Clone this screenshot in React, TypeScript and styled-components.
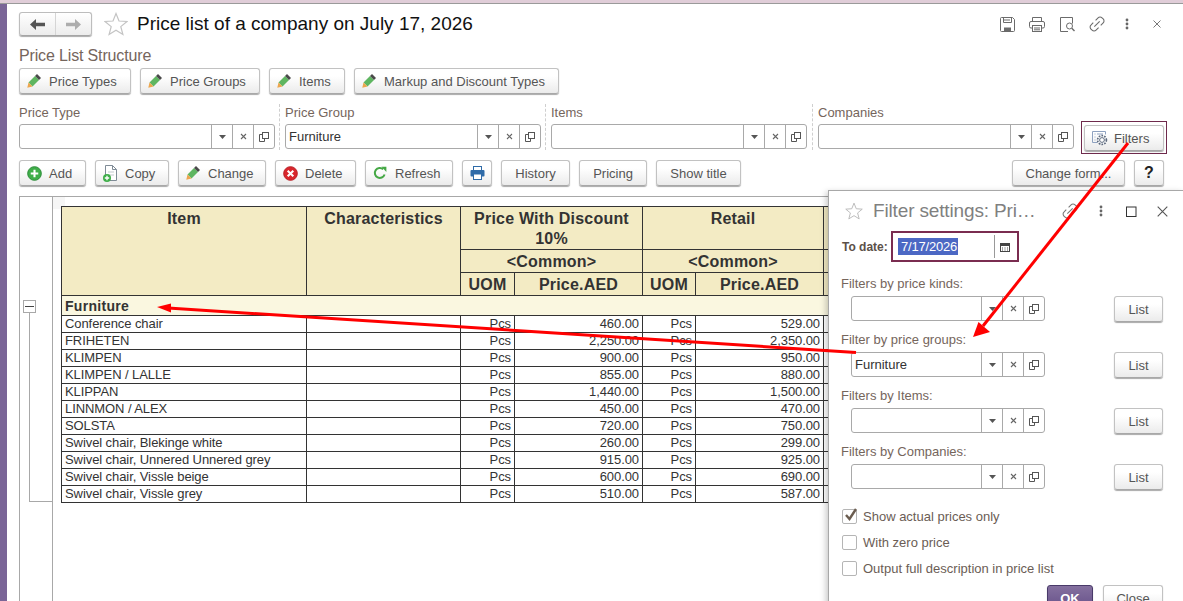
import React from "react";
import styled, { createGlobalStyle } from "styled-components";

const Global = createGlobalStyle`
  html, body { margin: 0; padding: 0; background: #fff; overflow: hidden; }
  body { font-family: "Liberation Sans", Arial, sans-serif; font-size: 13px; color: #4a4a4a; }
  * { box-sizing: border-box; }
`;

const Page = styled.div`
  position: relative; width: 1183px; height: 601px; overflow: hidden;
  display: flex; flex-direction: column; background: #fff;
`;
const TopStrip = styled.div`
  height: 4px; flex: none; background: #e0cdd8; border-bottom: 1px solid #9a9a9a;
`;
const Body = styled.div`flex: 1; display: flex; min-height: 0;`;
const Sidebar = styled.div`width: 7px; flex: none; background: #7a6597;`;
const Main = styled.div`
  flex: 1; min-width: 0; padding: 8px 0 0 12px; display: flex; flex-direction: column;
`;

const Header = styled.div`height: 24px; display: flex; align-items: center; flex: none;`;
const NavGroup = styled.div`
  display: flex; width: 73px; height: 24px; border: 1px solid #bdbdbd; border-bottom-color: #a5a5a5;
  border-radius: 3px; background: linear-gradient(#fff, #ececec); box-shadow: 0 1px 1px #aaa;
`;
const NavCell = styled.div<{ $sep?: boolean }>`
  flex: 1; display: flex; align-items: center; justify-content: center;
  ${(p) => (p.$sep ? "border-left: 1px solid #d5d5d5;" : "")}
`;
const StarSlot = styled.div`width: 24px; height: 24px; margin-left: 12px; display: flex; align-items: center;`;
const Title = styled.h1`
  margin: 0 0 0 9px; font-size: 19px; font-weight: 400; color: #111; white-space: nowrap;
`;
const HeaderTools = styled.div`
  margin-left: auto; margin-right: 11px; display: flex; align-items: center;
`;
const ToolSlot = styled.div<{ $w: number }>`
  width: ${(p) => p.$w}px; flex: none; display: flex; align-items: center; justify-content: center;
`;

const SectionTitle = styled.div`
  margin-top: 11px; height: 18px; line-height: 18px; font-size: 16px; letter-spacing: -0.15px; color: #75655c; flex: none;
`;
const ButtonRow = styled.div<{ $mt: number }>`
  display: flex; gap: 9px; margin-top: ${(p) => p.$mt}px; height: 26px; flex: none;
  padding-right: 19px;
`;
const Btn = styled.div<{ $w: number; $icon?: boolean; $gap?: number }>`
  width: ${(p) => p.$w}px; height: 26px; flex: none; display: flex; align-items: center;
  justify-content: ${(p) => (p.$icon ? "flex-start" : "center")};
  padding-left: ${(p) => (p.$icon ? 7 : 0)}px; gap: ${(p) => p.$gap ?? 8}px;
  border: 1px solid #c2c2c2; border-bottom-color: #a8a8a8; border-radius: 3px;
  background: linear-gradient(#fff 30%, #ebebeb); box-shadow: 0 1px 1px #a9a9a9;
  font-size: 13px; color: #555; white-space: nowrap;
`;
const Spacer = styled.div`flex: 1;`;
const HelpMark = styled.span`font-size: 16px; font-weight: 700; color: #222;`;

const FilterRow = styled.div`display: flex; margin-top: 10px; height: 46px; flex: none; align-items: flex-start;`;
const FilterCol = styled.div<{ $w: number; $first?: boolean; $last?: boolean }>`
  width: ${(p) => p.$w}px; height: 46px; flex: none;
  padding-left: ${(p) => (p.$first ? 0 : 5)}px;
  border-right: ${(p) => (p.$last ? "none" : "1px dashed #cfcfcf")};
  display: flex; flex-direction: column;
`;
const FieldLabel = styled.div`height: 20px; line-height: 17px; font-size: 13px; color: #75655c;`;
const Field = styled.div<{ $w: number }>`
  width: ${(p) => p.$w}px; height: 25px; flex: none; display: flex; background: #fff;
  border: 1px solid #a9a9a9; border-radius: 3px;
`;
const FieldValue = styled.div`flex: 1; padding-left: 3px; line-height: 23px; font-size: 13px; color: #333;`;
const FieldBtn = styled.div`
  width: 21px; flex: none; border-left: 1px solid #a9a9a9; display: flex; align-items: center; justify-content: center;
`;
const FilterHighlight = styled.div`
  width: 86px; height: 33px; flex: none; margin: 17px 0 0 7px; padding: 3px 2px;
  border: 1px solid #6e2a4c;
`;

const SheetBox = styled.div`
  margin-top: 10px; margin-right: 18px; flex: 1; min-height: 0; display: flex; overflow: hidden;
  border: 1px solid #a8a8a8; border-bottom: none;
`;
const Gutter = styled.div`
  width: 33px; flex: none; position: relative; border-right: 1px solid #a8a8a8;
`;
const TreeMarker = styled.div`
  position: absolute; left: 3px; top: 103px; width: 13px; height: 13px; z-index: 1;
  border: 1px solid #a8a8a8; background: #fff;
  &::after { content: ""; position: absolute; left: 1px; right: 1px; top: 5px; height: 1px; background: #444; }
`;
const TreeLine = styled.div`
  position: absolute; left: 9px; top: 115px; width: 23px; height: 190px;
  border-left: 1px solid #a8a8a8; border-bottom: 1px solid #a8a8a8;
`;
const SheetArea = styled.div`
  position: relative; flex: 1; min-width: 0; padding: 9px 0 0 8px;
  &::before { content: ""; position: absolute; left: 0; top: 0; width: 12px; height: 12px; background: #f6f6f6; }
`;
const Table = styled.table`
  position: relative; border-collapse: collapse; table-layout: fixed; width: 962px;
  font-size: 13px; color: #333;
`;
const HeadCell = styled.th`
  padding: 2px 0 0; border: 1px solid #333; background: #f3ebc4; font-size: 16px; line-height: 20px;
  font-weight: 700; text-align: center; vertical-align: top; color: #333; letter-spacing: 0.2px;
`;
const GroupCell = styled.td`
  padding: 0 3px; border: 1px solid #333; background: #faf7e0; height: 20px; font-size: 14px; font-weight: 700;
  line-height: 18px; letter-spacing: 0.3px; color: #333;
`;
const Cell = styled.td<{ $right?: boolean }>`
  padding: 0 3px; height: 17px; line-height: 16px; border: 1px solid #333; white-space: nowrap; overflow: hidden;
  letter-spacing: -0.08px;
  text-align: ${(p) => (p.$right ? "right" : "left")};
`;

const Dialog = styled.div`
  position: absolute; left: 828px; top: 190px; width: 356px; height: 430px; background: #fff;
  border: 1px solid #a8a8a8; box-shadow: -2px 2px 6px rgba(0,0,0,.22); padding-left: 13px;
`;
const DialogHeader = styled.div`height: 40px; display: flex; align-items: center; padding-left: 3px;`;
const DialogTitle = styled.div`
  margin-left: 10px; font-size: 19px; letter-spacing: -0.15px; color: #808080; white-space: nowrap; width: 181px;
`;
const DateRow = styled.div`display: flex; align-items: center; height: 31px;`;
const DateLabel = styled.div`font-size: 12px; font-weight: 700; color: #5c5048; width: 49px; white-space: nowrap;`;
const DateBox = styled.div`
  width: 128px; height: 31px; border: 2px solid #7a2c50; display: flex; align-items: center; padding-left: 5px;
`;
const Selected = styled.span`background: #4c68c4; color: #fff; font-size: 13px; line-height: 17px; padding: 0 1px 0 3px; letter-spacing: -0.2px;`;
const DateBtn = styled.div`
  margin-left: auto; width: 23px; height: 23px; border-left: 1px solid #999; display: flex; align-items: center; padding-left: 5px;
`;
const FilterSection = styled.div<{ $first?: boolean }>`margin-top: ${(p) => (p.$first ? 14 : 10)}px;`;
const SectionLabel = styled.div`height: 20px; line-height: 16px; font-size: 13px; margin-left: -1px; color: #75655c; white-space: nowrap;`;
const SectionRow = styled.div`display: flex; padding-left: 9px; height: 26px;`;
const ListSlot = styled.div`margin-left: 69px;`;
const CheckGroup = styled.div`margin-top: 13px;`;
const CheckRow = styled.div`height: 26px; display: flex; align-items: center; gap: 6px; font-size: 13px; color: #6b5d55;`;
const CheckBox = styled.div`
  width: 15px; height: 15px; border: 1px solid #b5b5b5; border-radius: 2px; position: relative; background: #fff;
`;
const CheckMark = styled.svg`position: absolute; left: 0; top: -3px;`;
const DialogActions = styled.div`
  margin-top: 4px; display: flex; justify-content: flex-end; gap: 10px; padding-right: 20px;
`;
const PrimaryBtn = styled(Btn)`
  background: linear-gradient(#84709f, #654f88); border-color: #493a69; color: #fff; font-weight: 700;
`;
const Overlay = styled.svg`position: absolute; left: 0; top: 0; pointer-events: none; z-index: 5;`;

const Pencil = () => (
  <svg width="14" height="14" viewBox="0 0 14 14">
    <polygon points="1.5,8.5 8,2 12,6 5.5,12.5" fill="#5fb661" />
    <polygon points="1.5,8.5 5.5,12.5 0.3,13.7" fill="#eda64d" />
    <polygon points="8,2 10,0 14,4 12,6" fill="#4a4a4a" />
  </svg>
);
const PlusCircle = () => (
  <svg width="15" height="15" viewBox="0 0 16 16">
    <circle cx="8" cy="8" r="7.3" fill="#3fae49" stroke="#2a8a36" />
    <path d="M8 4v8M4 8h8" stroke="#fff" strokeWidth="2.2" />
  </svg>
);
const CopyIcon = () => (
  <svg width="14" height="18" viewBox="0 0 14 18">
    <path d="M2.5 1.5h7l4 4v11h-11z" fill="#fff" stroke="#7f8b96" />
    <path d="M9.5 1.5v4h4" fill="none" stroke="#7f8b96" />
    <path d="M5 8h6M5 11h6" stroke="#c3c9ce" />
    <circle cx="4" cy="14" r="4" fill="#3fae49" />
    <path d="M4 11.8v4.4M1.8 14h4.4" stroke="#fff" strokeWidth="1.3" />
  </svg>
);
const DeleteIcon = () => (
  <svg width="15" height="15" viewBox="0 0 16 16">
    <circle cx="8" cy="8" r="7.3" fill="#d8262c" stroke="#b81c22" />
    <path d="M5 5l6 6M11 5l-6 6" stroke="#fff" strokeWidth="2.2" />
  </svg>
);
const RefreshIcon = () => (
  <svg width="14" height="14" viewBox="0 0 14 14">
    <path d="M11.6 8.5A5 5 0 1 1 10.2 3.2" fill="none" stroke="#45a845" strokeWidth="2" />
    <polygon points="8.4,0.8 13.4,0.8 13.4,6" fill="#45a845" />
  </svg>
);
const PrintBlue = () => (
  <svg width="15" height="14" viewBox="0 0 15 14">
    <rect x="3.5" y="0.5" width="8" height="4" fill="#fff" stroke="#2f6ba8" />
    <rect x="0.5" y="4" width="14" height="6.5" rx="1" fill="#2f6ba8" />
    <rect x="3.5" y="8" width="8" height="5.5" fill="#fff" stroke="#2f6ba8" />
  </svg>
);
const FiltersIcon = () => (
  <svg width="16" height="16" viewBox="0 0 16 16">
    <path d="M.5 1.5h13v3M.5 1.5v11h5" fill="none" stroke="#8fa2c0" />
    <path d="M2.5 4h1M2.5 7h1M2.5 10h1M5 4h6" stroke="#8fa2c0" />
    <circle cx="10" cy="10" r="4.4" fill="#fff" stroke="#5d6a7e" strokeWidth="1.7" strokeDasharray="1.7 1.1" />
    <circle cx="10" cy="10" r="2.4" fill="#fff" stroke="#5d6a7e" />
  </svg>
);
const Chevron = () => (
  <svg width="7" height="4" viewBox="0 0 7 4"><polygon points="0,0 7,0 3.5,4" fill="#555" /></svg>
);
const Cross = () => (
  <svg width="7" height="7" viewBox="0 0 7 7"><path d="M1 1l5 5M6 1L1 6" stroke="#666" strokeWidth="1.1" /></svg>
);
const OpenIcon = () => (
  <svg width="10" height="10" viewBox="0 0 10 10">
    <rect x="3.5" y="0.5" width="6" height="6" fill="none" stroke="#555" />
    <path d="M3.5 2.5H.5v7h5V6.5" fill="none" stroke="#555" />
  </svg>
);
const StarIcon = ({ size, color }: { size: number; color: string }) => (
  <svg width={size} height={size} viewBox="0 0 24 24">
    <polygon points="12,1.5 15,9 23,9.5 16.8,14.6 18.9,22.5 12,18.2 5.1,22.5 7.2,14.6 1,9.5 9,9" fill="none" stroke={color} strokeWidth="1.2" />
  </svg>
);
const SaveIcon = () => (
  <svg width="15" height="15" viewBox="0 0 15 15">
    <path d="M1.5.5h11l2 2v11a1 1 0 0 1-1 1h-12a1 1 0 0 1-1-1v-12a1 1 0 0 1 1-1z" fill="none" stroke="#6b6b6b" />
    <path d="M3.5.5v5h8v-5M4 3h6" fill="none" stroke="#6b6b6b" />
    <rect x="4" y="10.5" width="7" height="4" fill="#6b6b6b" />
  </svg>
);
const PrintIcon = () => (
  <svg width="16" height="15" viewBox="0 0 16 15">
    <path d="M3.5 4.5v-4h9v4" fill="none" stroke="#6b6b6b" />
    <rect x="0.5" y="4.5" width="15" height="6.5" rx="1.5" fill="none" stroke="#6b6b6b" />
    <rect x="3.5" y="8.5" width="9" height="6" fill="#fff" stroke="#6b6b6b" />
    <path d="M5 11h6M5 12.8h6" stroke="#6b6b6b" />
  </svg>
);
const PreviewIcon = () => (
  <svg width="15" height="15" viewBox="0 0 15 15">
    <path d="M8 14.5H.5V.5h12v6" fill="none" stroke="#6b6b6b" />
    <circle cx="9.5" cy="9" r="3" fill="#fff" stroke="#6b6b6b" />
    <path d="M11.8 11.3l2.7 2.7" stroke="#6b6b6b" strokeWidth="1.4" />
  </svg>
);
const LinkIcon = ({ color = "#6b6b6b", size = 16 }: { color?: string; size?: number }) => (
  <svg width={size} height={size} viewBox="0 0 15 15">
    <path d="M6.2 4l2.3-2.3a2.6 2.6 0 0 1 3.7 0l1.1 1.1a2.6 2.6 0 0 1 0 3.7L11 8.8M9 11l-2.4 2.3a2.6 2.6 0 0 1-3.7 0L1.8 12.2a2.6 2.6 0 0 1 0-3.7L4 6.2" fill="none" stroke={color} />
    <path d="M5 10l5-5" stroke={color} />
  </svg>
);
const Dots = () => (
  <svg width="4" height="12" viewBox="0 0 4 12">
    <circle cx="2" cy="2" r="1.4" fill="#666" /><circle cx="2" cy="6" r="1.4" fill="#666" /><circle cx="2" cy="10" r="1.4" fill="#666" />
  </svg>
);
const CloseIcon = ({ size = 8 }: { size?: number }) => (
  <svg width={size} height={size} viewBox="0 0 8 8"><path d="M.5.5l7 7M7.5.5l-7 7" stroke="#555" strokeWidth="0.8" /></svg>
);
const CalendarIcon = () => (
  <svg width="10" height="10" viewBox="0 0 10 10">
    <rect x="0.5" y="1.5" width="9" height="8" fill="#fff" stroke="#444" />
    <rect x="0.5" y="1.5" width="9" height="2.5" fill="#444" />
    <path d="M2 6h1M4.5 6h1M7 6h1M2 8h1M4.5 8h1M7 8h1" stroke="#444" />
  </svg>
);

const LookupButtons = () => (
  <>
    <FieldBtn><Chevron /></FieldBtn>
    <FieldBtn><Cross /></FieldBtn>
    <FieldBtn><OpenIcon /></FieldBtn>
  </>
);

const rows: [string, string, string][] = [
  ["Conference chair", "460.00", "529.00"],
  ["FRIHETEN", "2,250.00", "2,350.00"],
  ["KLIMPEN", "900.00", "950.00"],
  ["KLIMPEN / LALLE", "855.00", "880.00"],
  ["KLIPPAN", "1,440.00", "1,500.00"],
  ["LINNMON / ALEX", "450.00", "470.00"],
  ["SOLSTA", "720.00", "750.00"],
  ["Swivel chair, Blekinge white", "260.00", "299.00"],
  ["Swivel chair, Unnered Unnered grey", "915.00", "925.00"],
  ["Swivel chair, Vissle beige", "600.00", "690.00"],
  ["Swivel chair, Vissle grey", "510.00", "587.00"],
];

const filters = [
  { label: "Filters by price kinds:", value: "" },
  { label: "Filter by price groups:", value: "Furniture" },
  { label: "Filters by Items:", value: "" },
  { label: "Filters by Companies:", value: "" },
];

export default function App() {
  return (
    <Page>
      <Global />
      <TopStrip />
      <Body>
        <Sidebar />
        <Main>
          <Header>
            <NavGroup>
              <NavCell>
                <svg width="15" height="11" viewBox="0 0 15 11"><path d="M6 0L0 5.5 6 11V7.3h9V3.7H6z" fill="#555" /></svg>
              </NavCell>
              <NavCell $sep>
                <svg width="15" height="11" viewBox="0 0 15 11"><path d="M9 0l6 5.5L9 11V7.3H0V3.7h9z" fill="#adadad" /></svg>
              </NavCell>
            </NavGroup>
            <StarSlot><StarIcon size={24} color="#c4c4c4" /></StarSlot>
            <Title>Price list of a company on July 17, 2026</Title>
            <HeaderTools>
              <ToolSlot $w={30}><SaveIcon /></ToolSlot>
              <ToolSlot $w={30}><PrintIcon /></ToolSlot>
              <ToolSlot $w={30}><PreviewIcon /></ToolSlot>
              <ToolSlot $w={30}><LinkIcon /></ToolSlot>
              <ToolSlot $w={30}><Dots /></ToolSlot>
              <ToolSlot $w={30}><CloseIcon /></ToolSlot>
            </HeaderTools>
          </Header>

          <SectionTitle>Price List Structure</SectionTitle>
          <ButtonRow $mt={3}>
            <Btn $w={112} $icon><Pencil />Price Types</Btn>
            <Btn $w={120} $icon><Pencil />Price Groups</Btn>
            <Btn $w={76} $icon><Pencil />Items</Btn>
            <Btn $w={205} $icon><Pencil />Markup and Discount Types</Btn>
          </ButtonRow>

          <FilterRow>
            <FilterCol $w={261} $first><FieldLabel>Price Type</FieldLabel><Field $w={256}><FieldValue /><LookupButtons /></Field></FilterCol>
            <FilterCol $w={266}><FieldLabel>Price Group</FieldLabel><Field $w={256}><FieldValue>Furniture</FieldValue><LookupButtons /></Field></FilterCol>
            <FilterCol $w={267}><FieldLabel>Items</FieldLabel><Field $w={256}><FieldValue /><LookupButtons /></Field></FilterCol>
            <FilterCol $w={261} $last><FieldLabel>Companies</FieldLabel><Field $w={256}><FieldValue /><LookupButtons /></Field></FilterCol>
            <FilterHighlight>
              <Btn $w={80} $icon $gap={6}><FiltersIcon />Filters</Btn>
            </FilterHighlight>
          </FilterRow>

          <ButtonRow $mt={10}>
            <Btn $w={67} $icon $gap={7}><PlusCircle />Add</Btn>
            <Btn $w={74} $icon><CopyIcon />Copy</Btn>
            <Btn $w={88} $icon><Pencil />Change</Btn>
            <Btn $w={81} $icon $gap={7}><DeleteIcon />Delete</Btn>
            <Btn $w={88} $icon><RefreshIcon />Refresh</Btn>
            <Btn $w={30}><PrintBlue /></Btn>
            <Btn $w={69}>History</Btn>
            <Btn $w={68}>Pricing</Btn>
            <Btn $w={85}>Show title</Btn>
            <Spacer />
            <Btn $w={113}>Change form...</Btn>
            <Btn $w={30}><HelpMark>?</HelpMark></Btn>
          </ButtonRow>

          <SheetBox>
            <Gutter>
              <TreeLine />
              <TreeMarker />
            </Gutter>
            <SheetArea>
              <Table>
                <colgroup>
                  <col width={245} /><col width={154} /><col width={54} /><col width={128} />
                  <col width={53} /><col width={128} /><col width={200} />
                </colgroup>
                <thead>
                  <tr style={{ height: 43 }}>
                    <HeadCell rowSpan={3}>Item</HeadCell>
                    <HeadCell rowSpan={3}>Characteristics</HeadCell>
                    <HeadCell colSpan={2}>Price With Discount<br />10%</HeadCell>
                    <HeadCell colSpan={2}>Retail</HeadCell>
                    <HeadCell />
                  </tr>
                  <tr style={{ height: 23 }}>
                    <HeadCell colSpan={2}>&lt;Common&gt;</HeadCell>
                    <HeadCell colSpan={2}>&lt;Common&gt;</HeadCell>
                    <HeadCell />
                  </tr>
                  <tr style={{ height: 23 }}>
                    <HeadCell>UOM</HeadCell><HeadCell>Price.AED</HeadCell>
                    <HeadCell>UOM</HeadCell><HeadCell>Price.AED</HeadCell>
                    <HeadCell />
                  </tr>
                </thead>
                <tbody>
                  <tr><GroupCell colSpan={7}>Furniture</GroupCell></tr>
                  {rows.map(([name, a, b]) => (
                    <tr key={name}>
                      <Cell>{name}</Cell>
                      <Cell />
                      <Cell $right>Pcs</Cell>
                      <Cell $right>{a}</Cell>
                      <Cell $right>Pcs</Cell>
                      <Cell $right>{b}</Cell>
                      <Cell />
                    </tr>
                  ))}
                </tbody>
              </Table>
            </SheetArea>
          </SheetBox>
        </Main>
      </Body>

      <Dialog>
        <DialogHeader>
          <StarIcon size={18} color="#b5b5b5" />
          <DialogTitle>Filter settings: Pri…</DialogTitle>
          <ToolSlot $w={31}><LinkIcon color="#777" /></ToolSlot>
          <ToolSlot $w={31}><Dots /></ToolSlot>
          <ToolSlot $w={31}>
            <svg width="11" height="11" viewBox="0 0 11 11"><rect x="0.5" y="1" width="9.5" height="9.5" fill="none" stroke="#333" /></svg>
          </ToolSlot>
          <ToolSlot $w={31}><CloseIcon size={11} /></ToolSlot>
        </DialogHeader>
        <DateRow>
          <DateLabel>To date:</DateLabel>
          <DateBox>
            <Selected>7/17/2026</Selected>
            <DateBtn><CalendarIcon /></DateBtn>
          </DateBox>
        </DateRow>
        {filters.map((f, i) => (
          <FilterSection key={f.label} $first={i === 0}>
            <SectionLabel>{f.label}</SectionLabel>
            <SectionRow>
              <Field $w={194}><FieldValue>{f.value}</FieldValue><LookupButtons /></Field>
              <ListSlot><Btn $w={49}>List</Btn></ListSlot>
            </SectionRow>
          </FilterSection>
        ))}
        <CheckGroup>
          <CheckRow>
            <CheckBox>
              <CheckMark width="16" height="16" viewBox="0 0 16 16"><path d="M3 8l3.5 4L13 2" fill="none" stroke="#6b5d50" strokeWidth="2.4" /></CheckMark>
            </CheckBox>
            Show actual prices only
          </CheckRow>
          <CheckRow><CheckBox />With zero price</CheckRow>
          <CheckRow><CheckBox />Output full description in price list</CheckRow>
        </CheckGroup>
        <DialogActions>
          <PrimaryBtn $w={46}>OK</PrimaryBtn>
          <Btn $w={60}>Close</Btn>
        </DialogActions>
      </Dialog>

      <Overlay width="1183" height="601" viewBox="0 0 1183 601">
        <line x1="1128" y1="143" x2="983" y2="326" stroke="#ff0000" strokeWidth="3" />
        <polygon points="973,337 978.5,322 990,332" fill="#ff0000" />
        <line x1="856" y1="352.5" x2="168" y2="308" stroke="#ff0000" strokeWidth="3" />
        <polygon points="157,307 171,303.5 171,312.5" fill="#ff0000" />
      </Overlay>
    </Page>
  );
}
